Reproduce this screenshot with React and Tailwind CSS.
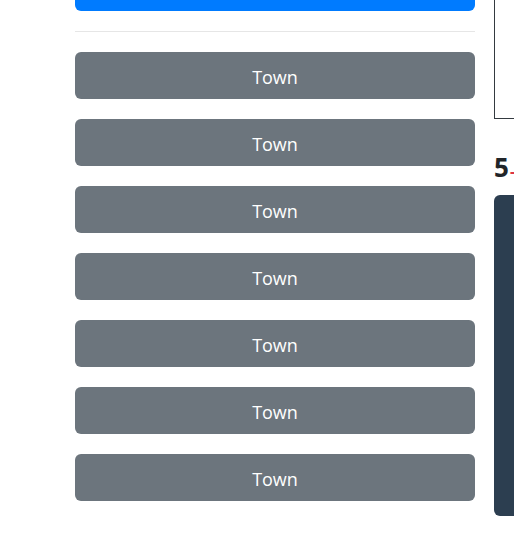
import React from "react";

const TOWNS = Array.from({ length: 7 }, (_, i) => ({ id: i, label: "Town" }));

export default function App() {
  return (
    <div className="w-[514px] h-[534px] overflow-hidden bg-white flex font-['Open_Sans',sans-serif]">
      <div className="ml-[75px] w-[400px] shrink-0 flex flex-col">
        <button className="-mt-[36px] h-[47px] w-full rounded-md bg-[#007bff] text-white text-[18px]">
          Search
        </button>
        <hr className="mt-[20px] mb-[20px] border-0 border-t border-[#e6e6e6]" />
        <div className="flex flex-col gap-[20px]">
          {TOWNS.map((t) => (
            <button
              key={t.id}
              className="h-[47px] w-full pt-[3px] rounded-md bg-[#6c757d] text-white text-[18px]"
            >
              {t.label}
            </button>
          ))}
        </div>
      </div>

      <div className="ml-[19px] w-[200px] shrink-0 flex flex-col">
        <div className="h-[119px] border border-t-0 border-[#343a40]" />
        <h2 className="mt-[33px] mb-[12px] h-[31px] leading-[31px] text-[26px] font-bold text-[#212529] whitespace-nowrap">
          5<span className="text-[#dc3545] text-[16px] ml-[1px]">-day</span>
        </h2>
        <div className="h-[321px] rounded-md bg-[#2c3e50]" />
      </div>
    </div>
  );
}
